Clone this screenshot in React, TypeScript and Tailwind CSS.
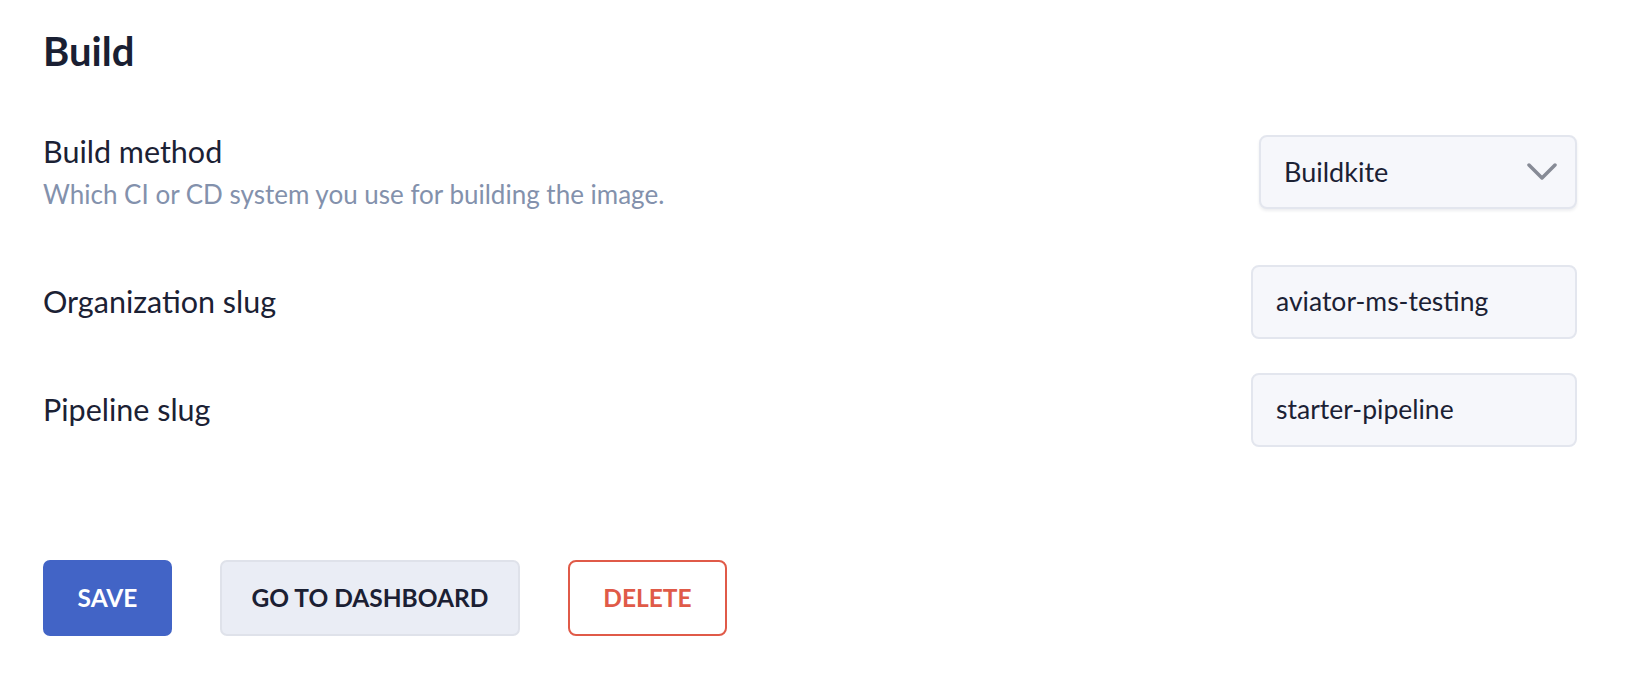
const font = { fontFamily: "Lato, 'Noto Sans', sans-serif" };

function TextField({ value }: { value: string }) {
  return (
    <div className="w-[326px] h-[74px] flex items-center pl-[23px] bg-[#f6f7fb] border-2 border-[#e3e6ee] rounded-[8px] text-[26.5px] text-[#1b2134]">
      {value}
    </div>
  );
}

export default function App() {
  return (
    <div className="min-h-screen bg-white pl-[43px] pr-[59px] pt-[31px]" style={font}>
      <h1 className="text-[40px] leading-none font-bold text-[#1a1f33]">Build</h1>

      {/* Build method */}
      <div className="mt-[64px] h-[74px] flex items-center justify-between">
        <div>
          <div className="text-[30.5px] leading-[44px] text-[#1b2134]">Build method</div>
          <div className="text-[26px] leading-[43px] text-[#8391ac]">
            Which CI or CD system you use for building the image.
          </div>
        </div>
        <div className="w-[318px] h-[74px] flex items-center justify-between pl-[23px] pr-[18px] bg-[#f6f7fb] border-2 border-[#e3e6ee] rounded-[8px] shadow-[0_2px_3px_rgba(30,40,70,0.08)] text-[27px] text-[#1b2134]">
          <span>Buildkite</span>
          <svg width="30" height="18" viewBox="0 0 30 18" fill="none">
            <polyline
              points="2,2 15,15 28,2"
              stroke="#878b96"
              strokeWidth="3.5"
              strokeLinecap="round"
              strokeLinejoin="round"
            />
          </svg>
        </div>
      </div>

      <div className="mt-[56px] h-[74px] flex items-center justify-between">
        <div className="text-[30.5px] text-[#1b2134]">Organization slug</div>
        <TextField value="aviator-ms-testing" />
      </div>

      <div className="mt-[34px] h-[74px] flex items-center justify-between">
        <div className="text-[30.5px] text-[#1b2134]">Pipeline slug</div>
        <TextField value="starter-pipeline" />
      </div>

      <div className="mt-[113px] flex items-center gap-[48px]">
        <button className="w-[129px] h-[76px] rounded-[7px] bg-[#4264c6] text-white text-[24.5px] font-bold">
          SAVE
        </button>
        <button className="w-[300px] h-[76px] rounded-[7px] bg-[#eaedf5] border-2 border-[#dfe2ea] text-[#1b2033] text-[24.5px] font-bold">
          GO TO DASHBOARD
        </button>
        <button className="w-[159px] h-[76px] rounded-[8px] bg-white border-2 border-[#e05a48] text-[#e05a48] text-[24.5px] font-bold">
          DELETE
        </button>
      </div>
    </div>
  );
}
